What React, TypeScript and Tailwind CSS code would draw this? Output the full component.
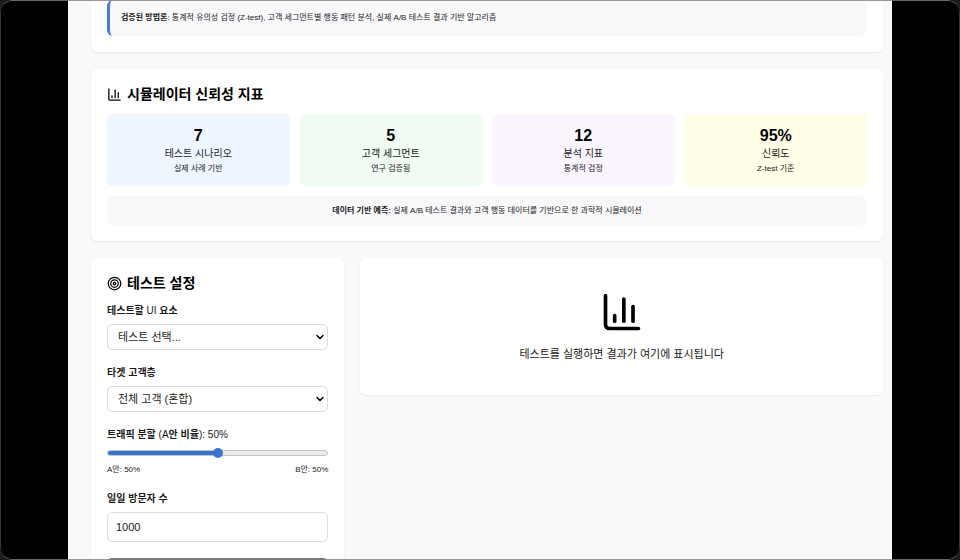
import { useId, useState, type ReactNode } from "react";
import { ChartColumn, ChevronDown, Target } from "lucide-react";

const METRICS = [
  { value: "7", label: "테스트 시나리오", note: "실제 사례 기반", tone: "bg-[#eff6ff]" },
  { value: "5", label: "고객 세그먼트", note: "연구 검증됨", tone: "bg-[#f0fbf4]" },
  { value: "12", label: "분석 지표", note: "통계적 검정", tone: "bg-[#faf5ff]" },
  { value: "95%", label: "신뢰도", note: "Z-test 기준", tone: "bg-[#feffe6]" },
];

const ELEMENTS = ["테스트 선택...", "버튼 색상", "상품 이미지"];
const SEGMENTS = ["전체 고객 (혼합)", "신규 고객", "기존 고객"];

function CardTitle({ icon, children }: { icon: ReactNode; children: ReactNode }) {
  return (
    <h2 className="flex items-center gap-[5px] text-[14px] leading-[18px] font-bold text-black">
      {icon}
      {children}
    </h2>
  );
}

function FieldLabel({ htmlFor, children }: { htmlFor: string; children: ReactNode }) {
  return (
    <label htmlFor={htmlFor} className="text-[10px] leading-[14px] font-semibold">
      {children}
    </label>
  );
}

function SelectField({ label, options }: { label: ReactNode; options: string[] }) {
  const id = useId();
  return (
    <div className="flex flex-col gap-1.5">
      <FieldLabel htmlFor={id}>{label}</FieldLabel>
      <div className="relative">
        <select
          id={id}
          className="block h-[26px] w-full appearance-none rounded-[5px] border border-[#dcdde3] bg-white px-2.5 text-[11px] text-[#1c1c1c]"
        >
          {options.map((o) => (
            <option key={o}>{o}</option>
          ))}
        </select>
        <ChevronDown
          size={12}
          strokeWidth={3}
          className="pointer-events-none absolute top-[7px] right-0.5 text-black"
        />
      </div>
    </div>
  );
}

export default function App() {
  const [split, setSplit] = useState(50);
  const [visitors, setVisitors] = useState("1000");

  return (
    <div className="h-screen bg-[#1c1c20] font-['Liberation_Sans','Noto_Sans_CJK_KR',sans-serif] text-[#1a1a1a]">
      <div className="relative h-full overflow-hidden rounded-xl bg-black px-[68px]">
        <main className="flex min-h-full flex-col gap-[17px] bg-[#f9f9fc] pr-[9px] pl-[23px]">
          <section className="rounded-b-md bg-white px-4 pb-4 shadow-[0_1px_2px_rgba(0,0,0,0.08)]">
            <p className="rounded-md border-l-3 border-[#4a78dc] bg-[#f9f9fc] pt-2.5 pb-2.5 pl-[11px] text-[8px] leading-4">
              <strong className="font-semibold">검증된 방법론</strong>: 통계적 유의성 검정 (Z-test), 고객 세그먼트별
              행동 패턴 분석, 실제 A/B 테스트 결과 기반 알고리즘
            </p>
          </section>

          <section className="rounded-md bg-white p-4 shadow-[0_1px_2px_rgba(0,0,0,0.08)]">
            <CardTitle icon={<ChartColumn size={15} />}>시뮬레이터 신뢰성 지표</CardTitle>
            <div className="mt-[11px] grid grid-cols-4 gap-2.5">
              {METRICS.map((m) => (
                <div key={m.label} className={`rounded-[5px] pt-3 pb-2.5 text-center ${m.tone}`}>
                  <div className="text-[16px] leading-5 font-bold text-black">{m.value}</div>
                  <div className="text-[10px] leading-4">{m.label}</div>
                  <div className="text-[8px] leading-[14px]">{m.note}</div>
                </div>
              ))}
            </div>
            <p className="mt-2.5 rounded-md bg-[#f9f9fc] py-1.5 text-center text-[8px] leading-[17px]">
              <strong className="font-semibold">데이터 기반 예측:</strong> 실제 A/B 테스트 결과와 고객 행동 데이터를
              기반으로 한 과학적 시뮬레이션
            </p>
          </section>

          <div className="grid grid-cols-3 items-start gap-4">
            <form
              onSubmit={(e) => e.preventDefault()}
              className="rounded-md bg-white p-4 shadow-[0_1px_2px_rgba(0,0,0,0.08)]"
            >
              <CardTitle icon={<Target size={15} />}>테스트 설정</CardTitle>
              <div className="mt-3 flex flex-col gap-4">
                <SelectField
                  label={
                    <>
                      테스트할 <span className="font-normal">UI</span> 요소
                    </>
                  }
                  options={ELEMENTS}
                />
                <SelectField label="타겟 고객층" options={SEGMENTS} />

                <div className="flex flex-col gap-1.5">
                  <FieldLabel htmlFor="split">
                    트래픽 분할 <span className="font-normal">(A</span>안 비율
                    <span className="font-normal">): {split}%</span>
                  </FieldLabel>
                  <input
                    id="split"
                    type="range"
                    min={0}
                    max={100}
                    value={split}
                    onChange={(e) => setSplit(Number(e.target.value))}
                    style={{
                      backgroundImage: `linear-gradient(to right, #3b72d0 ${split}%, #ececec ${split}%)`,
                    }}
                    className="my-0.5 block h-1.5 w-full appearance-none rounded-full border border-[#c4c4c8] [&::-webkit-slider-thumb]:size-2.5 [&::-webkit-slider-thumb]:appearance-none [&::-webkit-slider-thumb]:rounded-full [&::-webkit-slider-thumb]:bg-[#3b72d0]"
                  />
                  <div className="flex justify-between text-[8px] leading-3">
                    <span>A안: {split}%</span>
                    <span>B안: {100 - split}%</span>
                  </div>
                </div>

                <div className="flex flex-col gap-1.5">
                  <FieldLabel htmlFor="visitors">일일 방문자 수</FieldLabel>
                  <input
                    id="visitors"
                    type="text"
                    inputMode="numeric"
                    value={visitors}
                    onChange={(e) => setVisitors(e.target.value)}
                    className="h-[30px] w-full rounded-[5px] border border-[#dcdde3] px-2 text-[11px]"
                  />
                </div>

                <button type="submit" aria-label="테스트 실행" className="h-8 rounded-[5px] bg-[#74777f]" />
              </div>
            </form>

            <section className="col-span-2 flex flex-col items-center gap-[11px] rounded-md bg-white py-8 shadow-[0_1px_2px_rgba(0,0,0,0.08)]">
              <ChartColumn size={44} className="text-black" />
              <p className="text-[11px] leading-[18px]">테스트를 실행하면 결과가 여기에 표시됩니다</p>
            </section>
          </div>
        </main>
        <div className="pointer-events-none absolute inset-0 rounded-xl border border-x-[#333333] border-y-[#808080]/80" />
      </div>
    </div>
  );
}
